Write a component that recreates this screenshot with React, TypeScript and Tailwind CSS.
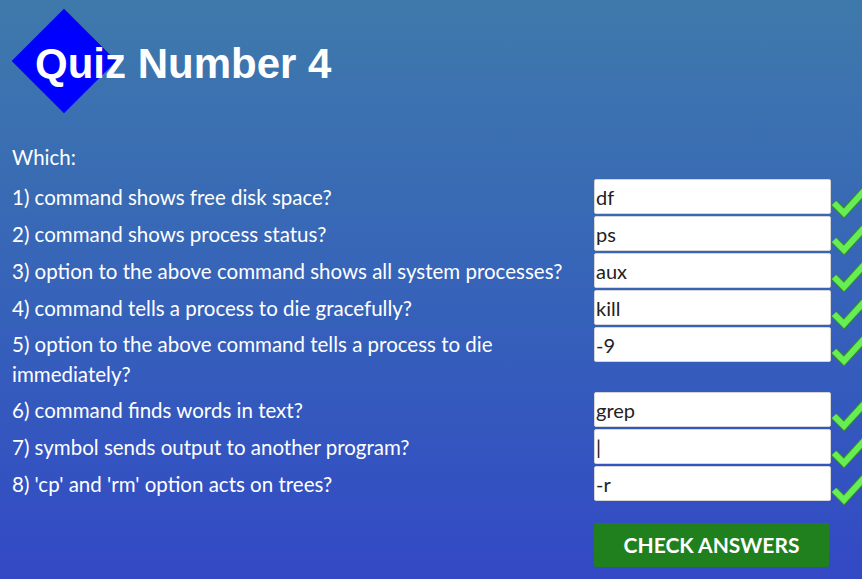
import React from "react";

const rows: { q: string; a: string }[] = [
  { q: "1) command shows free disk space?", a: "df" },
  { q: "2) command shows process status?", a: "ps" },
  { q: "3) option to the above command shows all system processes?", a: "aux" },
  { q: "4) command tells a process to die gracefully?", a: "kill" },
  { q: "5) option to the above command tells a process to die immediately?", a: "-9" },
  { q: "6) command finds words in text?", a: "grep" },
  { q: "7) symbol sends output to another program?", a: "|" },
  { q: "8) 'cp' and 'rm' option acts on trees?", a: "-r" },
];

function Check() {
  return (
    <svg width="34" height="30" viewBox="0 0 34 30" className="block">
      <path d="M3 15 L13 25 L34 2" fill="none" stroke="#3d8a2a" strokeWidth="8" strokeLinecap="butt" strokeLinejoin="miter" />
      <path d="M3 15 L13 25 L34 2" fill="none" stroke="#66ef55" strokeWidth="6" strokeLinecap="butt" strokeLinejoin="miter" />
    </svg>
  );
}

export default function App() {
  return (
    <div
      className="w-full h-[579px] overflow-hidden bg-gradient-to-b from-[#3f79ab] to-[#3348c5] text-white"
      style={{ fontFamily: "Lato, 'Open Sans', sans-serif" }}
    >
      <div className="relative h-[120px]">
        <div className="absolute left-[27px] top-[24px] w-[74px] h-[74px] bg-[#0000ff] rotate-45" />
        <h1
          className="relative pt-[43px] pl-[35px] text-[42px] leading-none font-bold"
          style={{ fontFamily: "'Liberation Sans', Arial, sans-serif" }}
        >
          Quiz Number 4
        </h1>
      </div>
      <div className="pl-[12px]">
        <div className="h-[58px] pt-[22px] text-[20.5px] leading-[30px]">Which:</div>
        {rows.map((r, i) => (
          <div key={i} className="flex items-start">
            <div className="w-[582px] min-h-[37px] flex items-center text-[20.5px] leading-[30px] py-[2.5px]">
              <span>{r.q}</span>
            </div>
            <div className="pt-[1px] pb-[1px] relative">
              <div className="w-[237px] h-[35px] bg-white border border-[#d5d5d5] rounded-[2px] flex items-center text-[20px] text-[#222] pl-[1px]">
                {r.a}
              </div>
              <div className="absolute left-[237px] top-[10px]">
                <Check />
              </div>
            </div>
          </div>
        ))}
        <div className="flex mt-[21px]">
          <div className="w-[582px]" />
          <button className="w-[235px] h-[44px] bg-[#21801e] rounded-[2px] text-white text-[21px] font-bold uppercase">
            Check Answers
          </button>
        </div>
      </div>
    </div>
  );
}
